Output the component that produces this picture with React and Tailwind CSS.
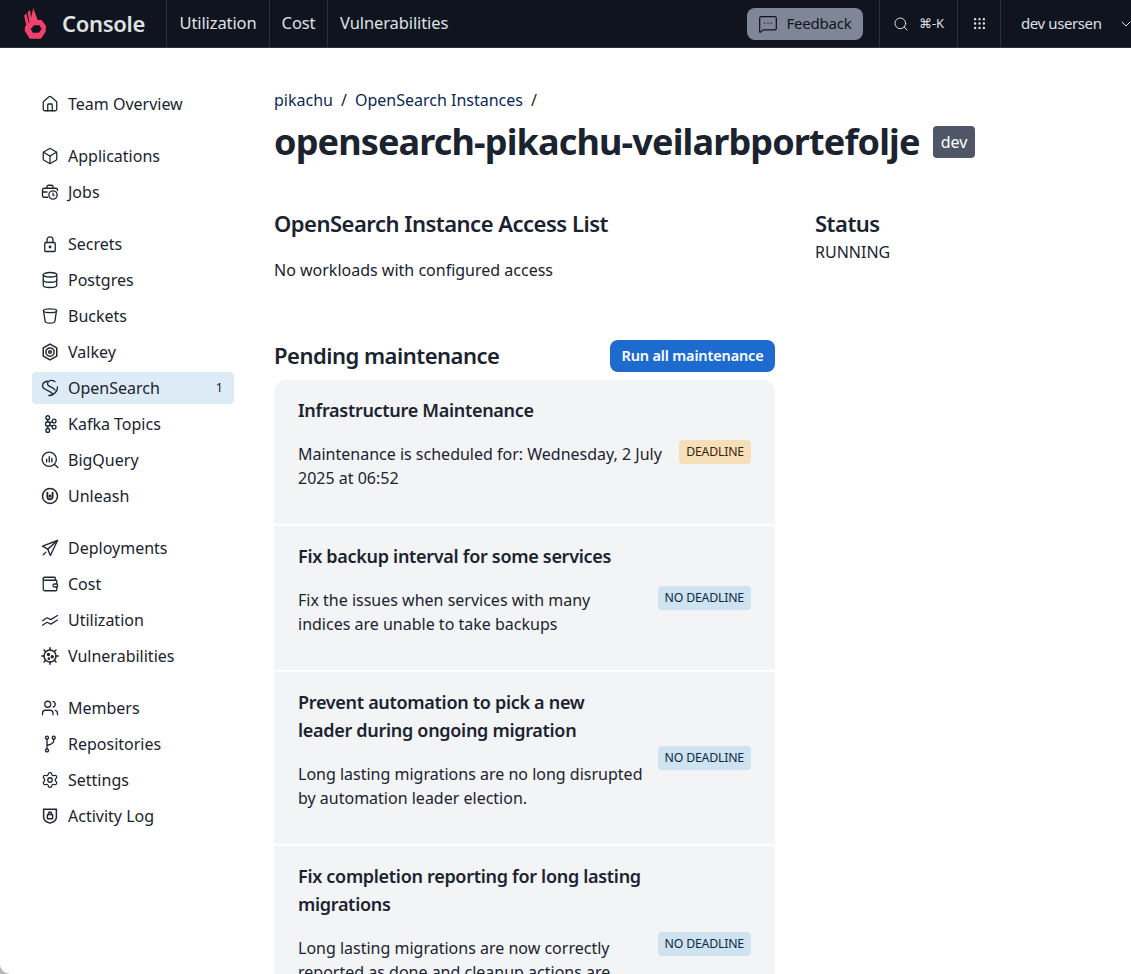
import React from 'react';
import {
  House, Box, Database, Wallet, Users, Settings, Search, Grip, ChevronDown, MessageSquareMore,
} from 'lucide-react';

const ico = { size: 18, strokeWidth: 1.7 };

const svg = {
  width: 18,
  height: 18,
  viewBox: '0 0 24 24',
  fill: 'none',
  stroke: 'currentColor',
  strokeWidth: 1.8,
  strokeLinecap: 'round',
  strokeLinejoin: 'round',
};

const JobsIcon = () => (
  <svg {...svg}>
    <path d="M9 19H4a2 2 0 0 1-2-2V9a2 2 0 0 1 2-2h16a2 2 0 0 1 2 2v1" />
    <path d="M8 7V5a2 2 0 0 1 2-2h4a2 2 0 0 1 2 2v2" />
    <path d="M2 12h6" />
    <circle cx="16" cy="16" r="5.5" />
    <path d="M16 13.500V16l1.500 1" />
  </svg>
);

const LockIcon = () => (
  <svg {...svg}>
    <rect x="5" y="10" width="14" height="12" rx="1.500" />
    <path d="M8 10V6.500a4 4 0 0 1 8 0V10" />
    <circle cx="12" cy="16" r="1" fill="currentColor" />
  </svg>
);

const BucketIcon = () => (
  <svg {...svg}>
    <ellipse cx="12" cy="5" rx="9" ry="2.500" />
    <path d="M3.500 6 5.500 19c.2 1.500 3 2.500 6.500 2.500s6.300-1 6.500-2.500L20.500 6" />
  </svg>
);

const ValkeyIcon = () => (
  <svg {...svg} strokeWidth="2">
    <path d="M12 1.500 21 6.500v11l-9 5-9-5v-11z" />
    <path d="M12 6.500a5.500 5.500 0 0 1 5.500 5.500c0 3-2.500 5.500-5.500 5.500S6.500 15 6.500 12A5.500 5.500 0 0 1 12 6.500z" />
    <circle cx="12" cy="12" r="1.800" />
  </svg>
);

const OpenSearchIcon = () => (
  <svg {...svg}>
    <path d="M22 10.500A11.500 11.500 0 0 1 10.500 22" />
    <path d="M9 3C5 3.500 2 6 2 9c0 3 2.500 4.500 6 6 3.500 1.500 6 2.500 8 5" />
    <path d="M18.500 3.500C16 2 12 1.500 10 3.500c-2 2-1.500 4.500 1 6 2.500 1.500 5 2 7.500 5" />
  </svg>
);

const KafkaIcon = () => (
  <svg {...svg}>
    <circle cx="9" cy="3.500" r="2.500" />
    <circle cx="9" cy="12" r="3" />
    <circle cx="9" cy="20.500" r="2.500" />
    <circle cx="17.500" cy="8" r="2.500" />
    <circle cx="17.500" cy="16" r="2.500" />
    <path d="M9 6v3M9 15v3M11.500 10.500l3.800-1.500M11.500 13.500l3.800 1.500" />
  </svg>
);

const BigQueryIcon = () => (
  <svg {...svg}>
    <circle cx="11" cy="11" r="9.500" />
    <path d="m18 18 4.500 4M7.500 11v3.500M11 7.500v7M14.500 10v4.500" />
  </svg>
);

const UnleashIcon = () => (
  <svg {...svg} strokeWidth="2">
    <circle cx="12" cy="12" r="10" />
    <path d="M8.500 7.500V13a3.500 3.500 0 0 0 7 0V7.500" strokeWidth="2.500" />
    <circle cx="12" cy="12" r="1" fill="currentColor" />
  </svg>
);

const PlaneIcon = () => (
  <svg {...svg}>
    <path d="M22 2 2 9.500l7 4 3.500 8.500z" />
    <path d="M22 2 9 13.500M6.500 17.500 3 21" />
  </svg>
);

const UtilizationIcon = () => (
  <svg {...svg} strokeWidth="1.600">
    <path d="m2 13 6-4 5 2.500L22 6" />
    <path d="m2 19 6-4 5 2.500L22 12" />
  </svg>
);

const VirusIcon = () => (
  <svg {...svg} strokeWidth="2">
    <circle cx="12" cy="12" r="8" />
    <path d="M12 1v3M12 20v3M1 12h3M20 12h3M4 4l2.300 2.300M17.700 17.700 20 20M4 20l2.300-2.300M17.700 6.300 20 4" />
    <circle cx="10" cy="10" r="1.300" fill="currentColor" />
    <circle cx="15" cy="13" r="1.300" fill="currentColor" />
    <circle cx="10.500" cy="15.500" r=".8" fill="currentColor" />
  </svg>
);

const BranchIcon = () => (
  <svg {...svg}>
    <circle cx="8" cy="3.500" r="2" />
    <circle cx="8" cy="20.500" r="2" />
    <circle cx="17" cy="3.500" r="2" />
    <path d="M8 5.500v13M17 5.500v2c0 4-5 5-9 6.500" />
  </svg>
);

const ActivityIcon = () => (
  <svg {...svg} strokeWidth="2">
    <path d="M3.500 3h17v10.500c0 4-3.500 6.500-8.500 8-5-1.500-8.500-4-8.500-8z" />
    <rect x="8.500" y="10" width="7" height="5.500" rx="1" />
    <path d="M10 10V8.500a2 2 0 0 1 4 0V10" />
  </svg>
);

const Logo = () => (
  <svg width="22" height="31" viewBox="0 0 22 31.500" fill="#f3406c" className="shrink-0">
    <path d="M0 7.500 2.300 5.500 5 17 2.500 19z" />
    <path d="M3.500 4 6 2 7.200 12 5.500 15.500z" />
    <path
      fillRule="evenodd"
      d="M9.300 0 13.700 12.300H17.700L22 18V24L17 31.300H5.700L.7 23.300V19L6 14zM10 17.500 6.700 21.300 8.800 25.200H14.800L17.800 21.300 15.500 17.500z"
    />
  </svg>
);

const groups = [
  [{ label: 'Team Overview', icon: <House {...ico} /> }],
  [
    { label: 'Applications', icon: <Box {...ico} /> },
    { label: 'Jobs', icon: <JobsIcon /> },
  ],
  [
    { label: 'Secrets', icon: <LockIcon /> },
    { label: 'Postgres', icon: <Database {...ico} /> },
    { label: 'Buckets', icon: <BucketIcon /> },
    { label: 'Valkey', icon: <ValkeyIcon /> },
    { label: 'OpenSearch', icon: <OpenSearchIcon />, active: true, count: 1 },
    { label: 'Kafka Topics', icon: <KafkaIcon /> },
    { label: 'BigQuery', icon: <BigQueryIcon /> },
    { label: 'Unleash', icon: <UnleashIcon /> },
  ],
  [
    { label: 'Deployments', icon: <PlaneIcon /> },
    { label: 'Cost', icon: <Wallet {...ico} /> },
    { label: 'Utilization', icon: <UtilizationIcon /> },
    { label: 'Vulnerabilities', icon: <VirusIcon /> },
  ],
  [
    { label: 'Members', icon: <Users {...ico} /> },
    { label: 'Repositories', icon: <BranchIcon /> },
    { label: 'Settings', icon: <Settings {...ico} /> },
    { label: 'Activity Log', icon: <ActivityIcon /> },
  ],
];

const items = [
  {
    title: ['Infrastructure Maintenance'],
    body: ['Maintenance is scheduled for: Wednesday, 2 July', '2025 at 06:52'],
    tag: 'DEADLINE',
  },
  {
    title: ['Fix backup interval for some services'],
    body: ['Fix the issues when services with many', 'indices are unable to take backups'],
    tag: 'NO DEADLINE',
  },
  {
    title: ['Prevent automation to pick a new', 'leader during ongoing migration'],
    body: ['Long lasting migrations are no long disrupted', 'by automation leader election.'],
    tag: 'NO DEADLINE',
  },
  {
    title: ['Fix completion reporting for long lasting', 'migrations'],
    body: ['Long lasting migrations are now correctly', 'reported as done and cleanup actions are', 'performed.'],
    tag: 'NO DEADLINE',
  },
];

function Header() {
  return (
    <header className="h-12 shrink-0 bg-[#10141e] border-b border-[#2a303c] flex items-stretch text-[#dfe1e5] text-[16.500px] tracking-[-0.1px]">
      <div className="w-[167px] pl-6 flex items-center gap-[16px] border-r border-[#2a303c]">
        <Logo />
        <span className="text-[22px] font-semibold tracking-[-0.3px]">Console</span>
      </div>
      <div className="w-[103px] flex items-center justify-center border-r border-[#2a303c]">Utilization</div>
      <div className="w-[58px] flex items-center justify-center border-r border-[#2a303c]">Cost</div>
      <div className="w-[121px] pl-3 flex items-center">Vulnerabilities</div>
      <div className="w-[431px] flex items-center justify-end pr-4 border-r border-[#2a303c]">
        <div className="w-[116px] h-8 rounded-lg bg-[#7f8695] text-[#10141e] flex items-center justify-center gap-2 text-[15px] tracking-[-0.2px]">
          <MessageSquareMore size={20} strokeWidth={1.5} />
          <span>Feedback</span>
        </div>
      </div>
      <div className="w-[78px] flex items-center justify-center gap-[10px] border-r border-[#2a303c] text-[13px]">
        <Search size={16} strokeWidth={1.5} />
        <span>⌘-K</span>
      </div>
      <div className="w-[43px] flex items-center justify-center border-r border-[#2a303c]">
        <Grip size={15} strokeWidth={1.8} />
      </div>
      <div className="flex-1 pl-5 flex items-center justify-between whitespace-nowrap">
        <span className="text-[15px] tracking-[-0.4px]">dev usersen</span>
        <ChevronDown size={16} strokeWidth={1.5} className="shrink-0 -mr-[3px]" />
      </div>
    </header>
  );
}

function Sidebar() {
  return (
    <nav className="w-[274px] shrink-0 pl-8 pr-10 pt-10 flex flex-col gap-5">
      {groups.map((g, i) => (
        <div key={i} className="flex flex-col gap-1">
          {g.map((it) => (
            <div
              key={it.label}
              className={`h-8 pl-[9px] pr-2 flex items-center gap-[9px] rounded ${it.active ? 'bg-[#dcebf5]' : ''}`}
            >
              <span className="w-[18px] h-[18px] shrink-0 text-[#1f2733]">{it.icon}</span>
              <span className="flex-1 whitespace-nowrap">{it.label}</span>
              {it.count && <span className="text-[12.500px] mr-[3px]">{it.count}</span>}
            </div>
          ))}
        </div>
      ))}
    </nav>
  );
}

function Maintenance({ item }) {
  const deadline = item.tag === 'DEADLINE';
  return (
    <div className="shrink-0 bg-[#f3f4f6] px-6 flex items-center justify-between whitespace-nowrap">
      <div className="pt-4 pb-[34px] flex flex-col gap-[18px]">
        <div className="text-[18px] leading-7 font-semibold tracking-[-0.3px]">
          {item.title.map((t) => <div key={t}>{t}</div>)}
        </div>
        <div className="leading-6">
          {item.body.map((t) => <div key={t}>{t}</div>)}
        </div>
      </div>
      <span className={`h-6 px-[7px] flex items-center rounded text-[12.300px] tracking-[-0.2px] ${deadline ? 'bg-[#f5dfb8] text-[#3d1f0a]' : 'bg-[#cfe2ef] text-[#0a2a45]'}`}>
        {item.tag}
      </span>
    </div>
  );
}

export default function App() {
  return (
    <div className="h-[974px] overflow-hidden bg-[#b8b8b8] flex flex-col text-[#1b2330] text-[16px] font-['Noto_Sans',sans-serif]">
      <Header />
      <div className="flex-1 min-h-0 flex bg-white rounded-bl-[10px] overflow-hidden">
        <Sidebar />
        <main className="flex-1 pt-10 min-w-0">
          <div className="h-6 flex items-center gap-2 whitespace-nowrap">
            <span className="text-[#0b2a55]">pikachu</span>
            <span>/</span>
            <span className="text-[#0b2a55]">OpenSearch Instances</span>
            <span>/</span>
          </div>
          <div className="mt-[10px] flex items-center gap-[13px] whitespace-nowrap">
            <h1 className="text-[36px] leading-10 font-bold tracking-[-0.85px]">opensearch-pikachu-veilarbportefolje</h1>
            <span className="h-8 px-2 flex items-center rounded bg-[#4f5766] text-white">dev</span>
          </div>
          <div className="mt-[46px] flex">
            <div className="w-[501px] shrink-0">
              <h2 className="text-[22px] leading-[30px] font-semibold tracking-[-0.5px]">OpenSearch Instance Access List</h2>
              <p className="mt-5 leading-6">No workloads with configured access</p>
              <div className="mt-[58px] h-8 flex items-center justify-between">
                <h2 className="text-[22px] leading-[30px] pb-[2px] font-semibold tracking-[-0.5px]">Pending maintenance</h2>
                <button className="h-8 w-[165px] rounded-lg bg-[#1e6bd0] text-white text-[14.500px] font-semibold tracking-[-0.15px]">Run all maintenance</button>
              </div>
              <div className="mt-2 rounded-t-xl overflow-hidden flex flex-col gap-[2px]">
                {items.map((it) => <Maintenance key={it.title[0]} item={it} />)}
              </div>
            </div>
            <div className="ml-10">
              <h2 className="text-[22px] leading-[30px] font-semibold tracking-[-0.5px]">Status</h2>
              <p className="mt-[2px] leading-6">RUNNING</p>
            </div>
          </div>
        </main>
      </div>
    </div>
  );
}
